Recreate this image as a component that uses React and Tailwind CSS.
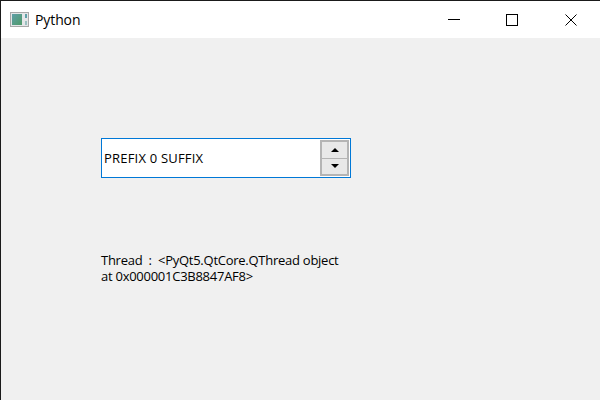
import React from 'react';

const font = { fontFamily: '"Open Sans", "Noto Sans", sans-serif' };

const AppIcon = () => (
  <svg width="20" height="16" viewBox="0 0 20 16" className="block">
    <defs>
      <linearGradient id="pane" x1="0" y1="0" x2="1" y2="1">
        <stop offset="0" stopColor="#5f9fa8" />
        <stop offset="1" stopColor="#4f9a68" />
      </linearGradient>
    </defs>
    <rect x="0.5" y="0.5" width="18" height="14" fill="#e4e6e8" stroke="#a8a8a8" />
    <rect x="2" y="2" width="10" height="11" fill="url(#pane)" />
    <rect x="15" y="2" width="2" height="4" fill="#5f9fa8" />
    <rect x="15" y="9" width="2" height="4" fill="#9ac0c0" />
  </svg>
);

const SpinButton = ({ up }) => (
  <div className="flex-1 flex items-center justify-center border-2 border-[#b4b4b4] bg-[#e8e8e8] first:border-b-0 last:border-t">
    <svg width="8" height="4" viewBox="0 0 8 4" className="block">
      <path d={up ? 'M4 0 L8 4 L0 4 Z' : 'M0 0 L8 0 L4 4 Z'} fill="#000" />
    </svg>
  </div>
);

export default function App() {
  return (
    <div className="w-[600px] h-[400px] flex flex-col border-l border-t border-[#1a1a1a] bg-[#f0f0f0] overflow-hidden" style={font}>
      <div className="h-[37px] bg-white flex items-center shrink-0">
        <div className="ml-[9px] mr-[5px]"><AppIcon /></div>
        <span className="text-[14px] tracking-[-0.1px] text-black">Python</span>
        <div className="ml-auto flex items-center h-full">
          <div className="w-[56px] h-full flex items-center justify-center">
            <div className="w-3 h-px bg-black" />
          </div>
          <div className="w-[60px] h-full flex items-center justify-center">
            <div className="w-3 h-3 border border-black" />
          </div>
          <div className="w-[58px] h-full flex items-center justify-center">
            <svg width="12" height="12" viewBox="0 0 12 12" className="block">
              <path d="M0.5 0.5 L11.5 11.5 M11.5 0.5 L0.5 11.5" stroke="#000" strokeWidth="1" fill="none" />
            </svg>
          </div>
        </div>
      </div>

      <div className="pl-[100px] pt-[100px] flex flex-col">
        <div className="w-[250px] h-[40px] flex items-center bg-white border border-[#0078d7] pl-[2px] pr-px py-px">
          <span className="flex-1 pt-px text-[13px] tracking-[0.2px] text-black">PREFIX 0 SUFFIX</span>
          <div className="w-[29px] h-[36px] flex flex-col">
            <SpinButton up />
            <SpinButton />
          </div>
        </div>
        <div className="w-[245px] mt-[74px] text-[13px] tracking-[-0.26px] leading-[16px] text-black whitespace-pre-wrap">
          {'Thread  :  <PyQt5.QtCore.QThread object at 0x000001C3B8847AF8>'}
        </div>
      </div>
    </div>
  );
}
